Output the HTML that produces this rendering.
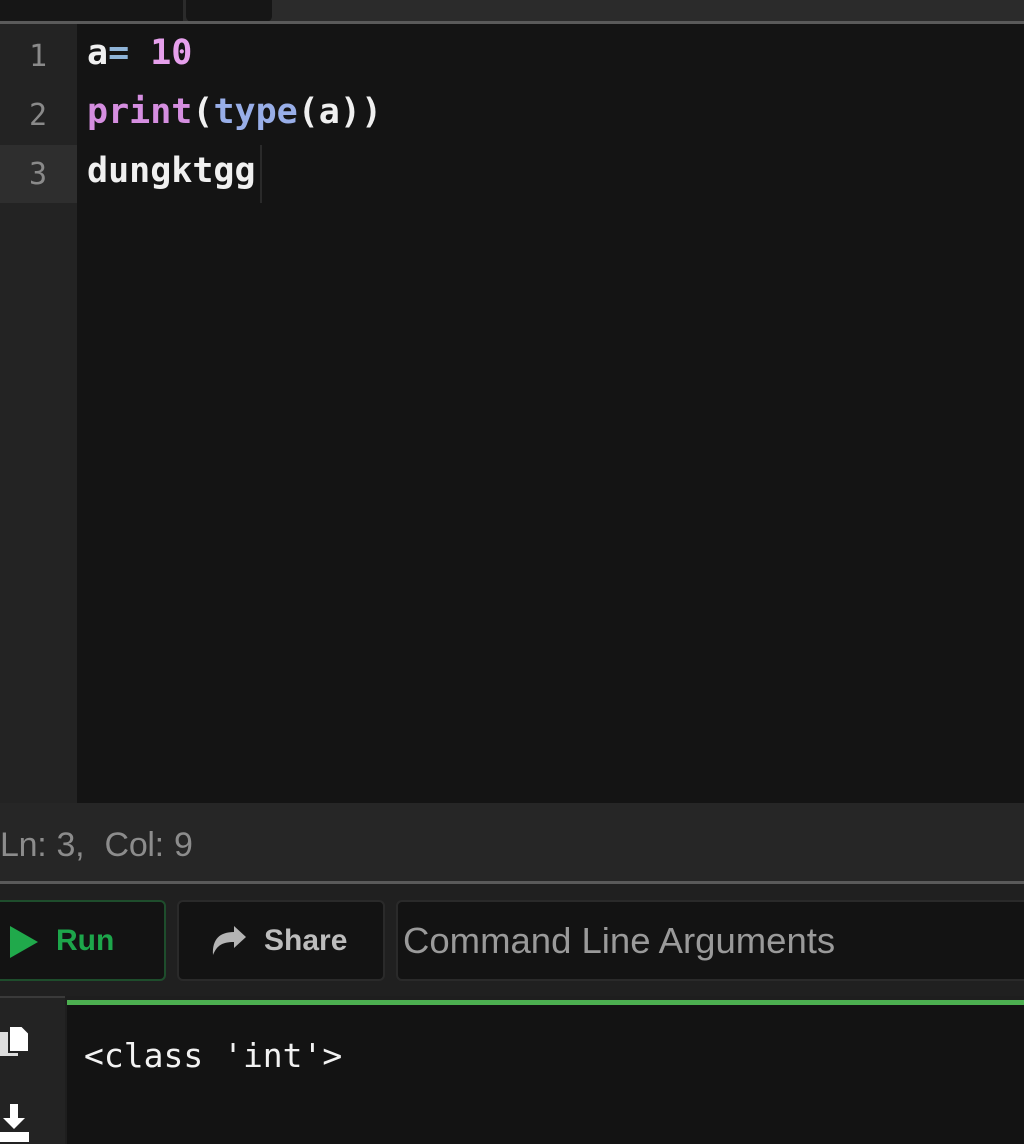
<!DOCTYPE html>
<html><head><style>
*{margin:0;padding:0;box-sizing:border-box}
body{width:1024px;height:1144px;background:#1e1e1e;overflow:hidden;position:relative;font-family:"Liberation Sans",sans-serif}
.abs{position:absolute}
.mono{font-family:"DejaVu Sans Mono","Liberation Mono",monospace}
.ln{position:absolute;left:0;width:76px;text-align:center;color:#8a8a8a;font-size:30px}
.code{position:absolute;left:87px;color:#f0f0f0;font-size:35px;font-weight:bold}
</style></head><body>
<div class="abs" style="left:0;top:0;width:1024px;height:22px;background:#2b2b2b"></div>
<div class="abs" style="left:0;top:0;width:183px;height:22px;background:#161616"></div>
<div class="abs" style="left:186px;top:0;width:86px;height:22px;background:#161616;border-radius:0 0 6px 6px"></div>
<div class="abs" style="left:0;top:21px;width:1024px;height:3px;background:#5a5a5a"></div>
<div class="abs" style="left:0;top:24px;width:77px;height:779px;background:#232323"></div>
<div class="abs" style="left:77px;top:24px;width:947px;height:779px;background:#141414"></div>
<div class="abs" style="left:0;top:145px;width:77px;height:58px;background:#2e2e2e"></div>
<div class="abs" style="left:260px;top:145px;width:2px;height:58px;background:#2a2a2a"></div>
<div class="ln mono" style="top:39px">1</div>
<div class="ln mono" style="top:98px">2</div>
<div class="ln mono" style="top:157px">3</div>
<div class="code mono" style="top:33px">a<span style="color:#8fb4d8">=</span> <span style="color:#e6a0ec">10</span></div>
<div class="code mono" style="top:92px"><span style="color:#d58ee0">print</span>(<span style="color:#98aee8">type</span>(a))</div>
<div class="code mono" style="top:151px">dungktgg</div>
<div class="abs" style="left:0;top:803px;width:1024px;height:79px;background:#262626"></div>
<div class="abs" style="left:0;top:826px;color:#8c8c8c;font-size:34px;word-spacing:1px;letter-spacing:-0.3px">Ln: 3,&nbsp; Col: 9</div>
<div class="abs" style="left:0;top:881px;width:1024px;height:3px;background:#5a5a5a"></div>
<div class="abs" style="left:0;top:884px;width:1024px;height:112px;background:#202020"></div>
<div class="abs" style="left:-6px;top:900px;width:172px;height:81px;background:#131313;border:2px solid #1e4d2c;border-radius:6px"></div>
<svg class="abs" style="left:8px;top:924px" width="32" height="36"><polygon points="2,2 30,18 2,34" fill="#20a94b"/></svg>
<div class="abs" style="left:56px;top:924px;color:#1da64b;font-size:30px;font-weight:bold">Run</div>
<div class="abs" style="left:177px;top:900px;width:208px;height:81px;background:#131313;border:2px solid #2a2a2a;border-radius:6px"></div>
<svg class="abs" style="left:210px;top:925px" width="38" height="32"><path d="M36 12 L24 1 V7 C10 7 2 14 3 30 C7 20 13 17 24 17 V23 Z" fill="#b4b4b4"/></svg>
<div class="abs" style="left:264px;top:924px;color:#bdbdbd;font-size:30px;font-weight:bold">Share</div>
<div class="abs" style="left:396px;top:900px;width:640px;height:81px;background:#131313;border:2px solid #2a2a2a;border-radius:6px"></div>
<div class="abs" style="left:403px;top:920px;color:#9a9a9a;font-size:36.5px">Command Line Arguments</div>
<div class="abs" style="left:0;top:996px;width:65px;height:148px;background:#232323;border-top:2px solid #3a3a3a"></div>
<div class="abs" style="left:67px;top:1000px;width:957px;height:5px;background:#4caf50"></div>
<div class="abs" style="left:67px;top:1005px;width:957px;height:139px;background:#131313"></div>
<svg class="abs" style="left:0;top:1024px" width="32" height="38"><rect x="0" y="8" width="18" height="24" fill="#ddd"/><path d="M9 2 H22 L29 9 V28 H9 Z" fill="#fff" stroke="#232323" stroke-width="2"/></svg>
<svg class="abs" style="left:0;top:1102px" width="32" height="42"><path d="M10 2 H18 V16 H25 L14 27 L3 16 H10 Z" fill="#fff"/><rect x="0" y="30" width="29" height="10" fill="#fff"/></svg>
<div class="abs mono" style="left:84px;top:1036px;color:#f2f2f2;font-size:33px">&lt;class 'int'&gt;</div>
</body></html>
